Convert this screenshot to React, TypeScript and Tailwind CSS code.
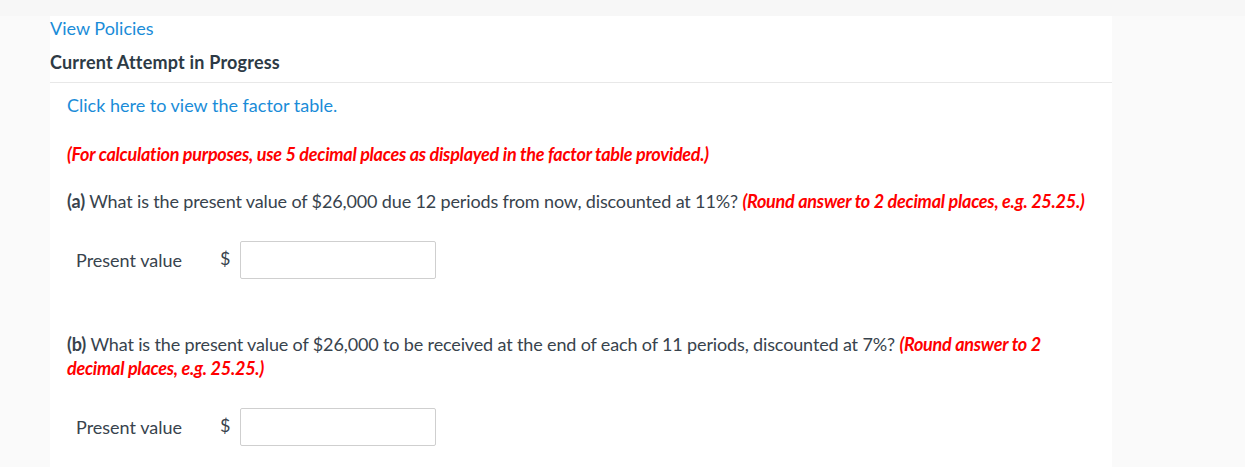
export default function App() {
  return (
    <div className="min-h-[467px] bg-[#f7f7f7] pt-4 font-['Lato','Noto_Sans',sans-serif] text-[18px] text-[#38434d]">
      <div className="bg-[#fafafa]">
        <div className="ml-[50px] w-[1062px] bg-white pb-6">
          <a className="block leading-6 text-[#1a8cd8]">View Policies</a>
          <div className="mt-[10px] leading-6 font-bold tracking-[0.2px] text-[#2d3a45]">Current Attempt in Progress</div>
          <div className="mt-[8px] h-px bg-[#e8e8e8]" />
          <div className="px-[17px]">
            <a className="mt-[10px] block leading-6 text-[#1a8cd8]">Click here to view the factor table.</a>
            <p className="mt-[25px] leading-6 font-bold italic tracking-[-0.26px] text-[#ff0000]">
              (For calculation purposes, use 5 decimal places as displayed in the factor table provided.)
            </p>
            <p className="mt-[23px] leading-6 tracking-[-0.14px]">
              <span className="font-bold">(a)</span> What is the present value of $26,000 due 12 periods from now, discounted at 11%?{' '}
              <span className="font-bold italic tracking-[-0.25px] text-[#ff0000]">(Round answer to 2 decimal places, e.g. 25.25.)</span>
            </p>
            <div className="mt-[28px] flex items-center pl-[9px]">
              <span className="w-[144px]">Present value</span>
              <span className="mb-1 w-[20px]">$</span>
              <input className="h-[38px] w-[196px] rounded-[2px] border border-[#cfcfcf] bg-white" />
            </div>
            <p className="mt-[53px] w-[990px] leading-6 tracking-[-0.14px]">
              <span className="font-bold">(b)</span> What is the present value of $26,000 to be received at the end of each of 11 periods, discounted at 7%?{' '}
              <span className="font-bold italic tracking-[-0.25px] text-[#ff0000]">(Round answer to 2 decimal places, e.g. 25.25.)</span>
            </p>
            <div className="mt-[28px] flex items-center pl-[9px]">
              <span className="w-[144px]">Present value</span>
              <span className="mb-1 w-[20px]">$</span>
              <input className="h-[38px] w-[196px] rounded-[2px] border border-[#cfcfcf] bg-white" />
            </div>
          </div>
        </div>
      </div>
    </div>
  )
}
